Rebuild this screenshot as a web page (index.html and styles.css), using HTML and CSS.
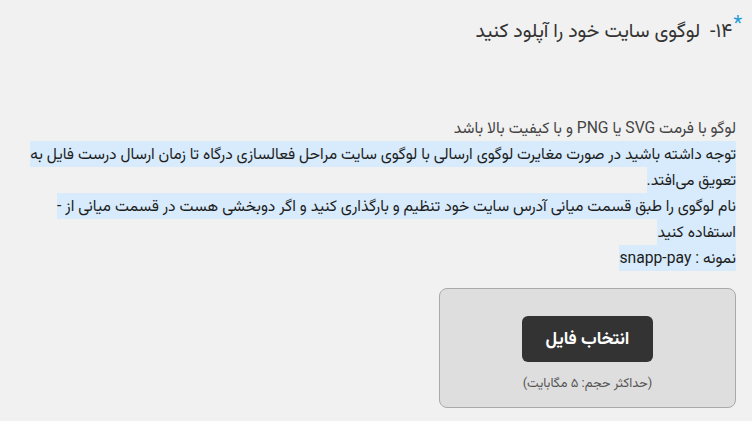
FILE: index.html
```html
<!DOCTYPE html>
<html lang="fa" dir="rtl">
<head>
<meta charset="utf-8">
<link rel="stylesheet" href="styles.css">
</head>
<body>
<div class="page">
  <h2 class="title"><span class="req">*</span>۱۴-&nbsp; لوگوی سایت خود را آپلود کنید</h2>
  <div class="desc">
    <div class="line plain">لوگو با فرمت SVG یا PNG و با کیفیت بالا باشد</div>
    <div class="line hl">توجه داشته باشید در صورت مغایرت لوگوی ارسالی با لوگوی سایت مراحل فعالسازی درگاه تا زمان ارسال درست فایل به</div>
    <div class="line hl">تعویق می‌افتد.</div>
    <div class="line hl">نام لوگوی را طبق قسمت میانی آدرس سایت خود تنظیم و بارگذاری کنید و اگر دوبخشی هست در قسمت میانی از -</div>
    <div class="line hl">استفاده کنید</div>
    <div class="line hl">نمونه : snapp-pay</div>
  </div>
  <div class="upload">
    <button class="pick" type="button">انتخاب فایل</button>
    <div class="limit">(حداکثر حجم: ۵ مگابایت)</div>
  </div>
</div>
</body>
</html>
```
FILE: styles.css
```css
html, body {
  margin: 0;
  padding: 0;
  background: #f1f1f1;
}
body {
  font-family: Roboto, "Vazirmatn", "Noto Sans Arabic", "DejaVu Sans", sans-serif;
  color: #222;
}
.page {
  padding: 16px 16px 0 16px;
}
.title {
  margin: 0;
  font-size: 19.7px;
  font-weight: normal;
  line-height: 30px;
  color: #333;
}
.req {
  color: #1e9bd7;
  font-size: 20px;
  vertical-align: top;
  line-height: 14px;
  margin-left: 1px;
  margin-right: -6px;
}
.desc {
  margin-top: 69px;
  font-size: 15.7px;
}
.line {
  width: fit-content;
  height: 26px;
  line-height: 26px;
  white-space: nowrap;
}
.plain {
  color: #444;
}
.hl {
  background: #d7ebfc;
  color: #1d1d1d;
}
.upload {
  margin-top: 17px;
  width: 295px;
  height: 118px;
  border: 1px solid #a9a9a9;
  border-radius: 8px;
  background: #dedede;
  display: flex;
  flex-direction: column;
  align-items: center;
}
.pick {
  margin-top: 27px;
  width: 131px;
  height: 46px;
  border: none;
  border-radius: 6px;
  background: #333;
  color: #fff;
  font-family: inherit;
  font-size: 17.5px;
  font-weight: bold;
}
.limit {
  margin-top: 12px;
  font-size: 13px;
  color: #555;
}
```
